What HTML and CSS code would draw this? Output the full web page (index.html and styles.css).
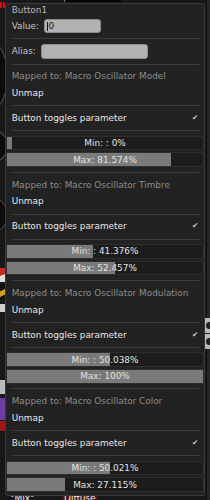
FILE: index.html
```html
<!DOCTYPE html>
<html>
<head>
<meta charset="utf-8">
<link rel="stylesheet" href="styles.css">
</head>
<body>
<div class="stage">
  <div class="bg-topbar"></div>
  <div class="bg-red"></div>
  <div class="bg-knob knob1"></div>
  <div class="bg-knob knob2"></div>
  <div class="bg-knob knob3"></div>
  <div class="bg-bit bit1"></div>
  <div class="bg-bit bit2"></div>
  <div class="bg-bit bit3"></div>
  <div class="bg-bit bit4"></div>
  <div class="bg-bit bit5"></div>
  <div class="bg-bit bit6"></div>
  <div class="bg-right"></div>
  <div class="bg-jack jack1"><span></span></div>
  <div class="bg-jack jack2"><span></span></div>
  <div class="bg-label mix">°Mix°</div>
  <div class="bg-label diffuse">Diffuse</div>

  <div class="menu">
    <div class="label title">Button1</div>
    <div class="field-row value-row">
      <span class="field-label">Value:</span>
      <span class="field value-field"><span class="caret"></span>0</span>
    </div>
    <div class="sep"></div>
    <div class="field-row alias-row">
      <span class="field-label">Alias:</span>
      <span class="field alias-field"></span>
    </div>
    <div class="sep"></div>

    <div class="label dim">Mapped to: Macro Oscillator Model</div>
    <div class="item">Unmap</div>
    <div class="sep"></div>
    <div class="item">Button toggles parameter<span class="check">✔</span></div>
    <div class="sep"></div>
    <div class="sliders">
      <div class="slider"><div class="fill" style="width:5px"></div><span class="stext">Min: : 0%</span></div>
      <div class="slider"><div class="fill" style="width:164px"></div><span class="stext">Max: 81.574%</span></div>
    </div>
    <div class="sep"></div>

    <div class="label dim">Mapped to: Macro Oscillator Timbre</div>
    <div class="item">Unmap</div>
    <div class="sep"></div>
    <div class="item">Button toggles parameter<span class="check">✔</span></div>
    <div class="sep"></div>
    <div class="sliders">
      <div class="slider"><div class="fill" style="width:86px"></div><span class="stext">Min: : 41.376%</span></div>
      <div class="slider"><div class="fill" style="width:108px"></div><span class="stext">Max: 52.457%</span></div>
    </div>
    <div class="sep"></div>

    <div class="label dim">Mapped to: Macro Oscillator Modulation</div>
    <div class="item">Unmap</div>
    <div class="sep"></div>
    <div class="item">Button toggles parameter<span class="check">✔</span></div>
    <div class="sep"></div>
    <div class="sliders">
      <div class="slider"><div class="fill" style="width:103px"></div><span class="stext">Min: : 50.038%</span></div>
      <div class="slider"><div class="fill" style="width:100%"></div><span class="stext">Max: 100%</span></div>
    </div>
    <div class="sep"></div>

    <div class="label dim">Mapped to: Macro Oscillator Color</div>
    <div class="item">Unmap</div>
    <div class="sep"></div>
    <div class="item">Button toggles parameter<span class="check">✔</span></div>
    <div class="sep"></div>
    <div class="sliders">
      <div class="slider"><div class="fill" style="width:103px"></div><span class="stext">Min: : 50.021%</span></div>
      <div class="slider"><div class="fill" style="width:58px"></div><span class="stext">Max: 27.115%</span></div>
    </div>
  </div>
</div>
</body>
</html>
```

FILE: styles.css
```css
html, body {
  margin: 0;
  padding: 0;
}
body {
  background: #161616;
  font-family: "DejaVu Sans", "Liberation Sans", sans-serif;
  font-size: 8.9px;
}
.stage {
  position: relative;
  width: 210px;
  height: 500px;
  overflow: hidden;
  background: #181818;
}

/* background app bits peeking around the menu */
.bg-topbar {
  position: absolute;
  left: 64px;
  top: 0;
  width: 56px;
  height: 2px;
  background: #050505;
  border-left: 1px solid #777;
}
.bg-red {
  position: absolute;
  left: 0;
  top: 2px;
  width: 5px;
  height: 6px;
  background: repeating-linear-gradient(90deg, #d01010 0 2px, #300 2px 3px);
}
.bg-knob {
  position: absolute;
  left: -30px;
  width: 36px;
  border-radius: 50%;
  background: #0c0c0c;
  border: 1px solid #555;
}
.knob1 { top: 40px; height: 70px; }
.knob2 { top: 128px; height: 34px; }
.knob3 { top: 196px; height: 36px; }
.bg-bit {
  position: absolute;
  left: 0;
  width: 5px;
}
.bit1 { top: 268px; height: 14px; background: linear-gradient(160deg, #c62828 0 50%, #ddd 50%); }
.bit2 { top: 284px; height: 16px; background: linear-gradient(150deg, #111 0 40%, #d49a2a 40% 70%, #111 70%); }
.bit3 { top: 304px; height: 8px; background: #cfcfcf; }
.bit4 { top: 380px; height: 14px; background: #bdbdbd; }
.bit5 { top: 398px; height: 22px; background: #6b3fa0; }
.bit6 { top: 421px; height: 10px; background: #a01818; }
.bg-right {
  position: absolute;
  left: 206px;
  top: 0;
  width: 4px;
  height: 500px;
  background: #262626;
  border-left: 1px solid #101010;
}
.bg-jack {
  position: absolute;
  left: 205px;
  width: 8px;
  height: 15px;
  background: #b9b9b9;
  display: flex;
  align-items: center;
  justify-content: center;
}
.bg-jack span {
  width: 7px;
  height: 7px;
  border-radius: 50%;
  background: #222;
}
.jack1 { top: 318px; }
.jack2 { top: 334px; }
.bg-label {
  position: absolute;
  top: 492px;
  color: #f0f0f0;
  font-size: 9px;
  line-height: 12px;
}
.mix { left: 10px; }
.diffuse {
  left: 62px;
  padding: 0 2px;
  background: #4a1414;
}

/* the context menu */
.menu {
  position: absolute;
  left: 5px;
  top: 2.5px;
  width: 198px;
  height: 491px;
  background: #222222;
  border: 1px solid #3a3a3a;
  border-radius: 3px;
  color: #e6e6e6;
  display: flex;
  flex-direction: column;
}
.label, .item {
  height: 16.7px;
  line-height: 16.7px;
  padding: 0 5.7px;
  white-space: nowrap;
}
.title {
  height: 12px;
  line-height: 12px;
  color: #b8b8b8;
}
.dim {
  color: #8c8c8c;
}
.item {
  display: flex;
  justify-content: space-between;
  color: #e8e8e8;
}
.check {
  color: #c8c8c8;
  font-size: 7.5px;
}
.field-row {
  display: flex;
  align-items: center;
  gap: 5px;
  padding: 0 5.7px;
  color: #c4c4c4;
}
.value-row {
  height: 14px;
  padding-top: 3.8px;
  padding-bottom: 1.5px;
}
.alias-row {
  height: 14.4px;
  padding-top: 1.1px;
  padding-bottom: 1.2px;
}
.field {
  display: flex;
  align-items: center;
  height: 100%;
  box-sizing: border-box;
  background: #b2b2b2;
  border: 1px solid #8a8a8a;
  border-radius: 3px;
  color: #111;
  padding-left: 2px;
}
.value-field { width: 57px; }
.alias-field { width: 107px; margin-left: 0.5px; }
.caret {
  width: 1px;
  height: 9px;
  background: #111;
  margin-right: 0.5px;
}
.sep {
  height: 8.4px;
  padding: 0 5.5px;
  display: flex;
  align-items: center;
}
.sep::before {
  content: "";
  flex: 1;
  height: 1px;
  background: #3c3c3c;
}
.sliders {
  display: flex;
  flex-direction: column;
  gap: 2px;
  padding: 0.6px 0 1.1px;
}
.slider {
  position: relative;
  height: 14.7px;
  box-sizing: border-box;
  background: #1c1c1c;
  border: 1px solid #2e2e2e;
  border-radius: 1px;
  display: flex;
  align-items: center;
  justify-content: center;
}
.fill {
  position: absolute;
  left: 0;
  top: 0;
  bottom: 0;
  background: #7a7a7a;
}
.stext {
  position: relative;
  color: #e2e2e2;
  white-space: nowrap;
}
```
